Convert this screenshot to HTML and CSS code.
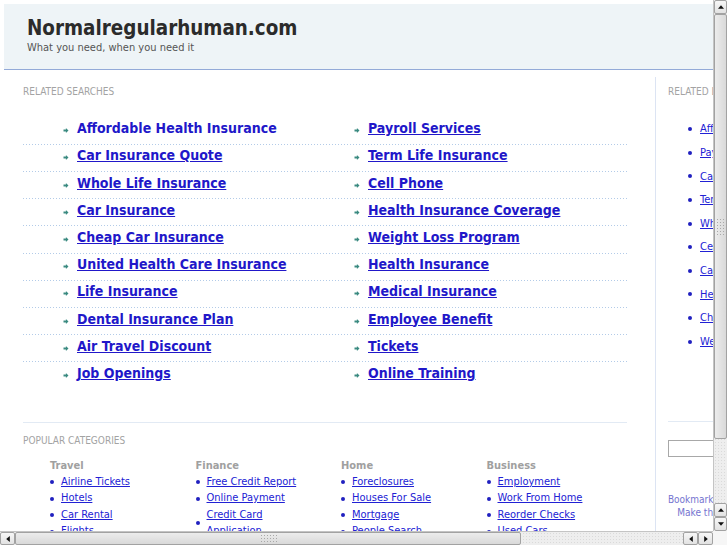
FILE: index.html
```html
<!DOCTYPE html>
<html lang="en">
<head>
<meta charset="utf-8">
<title>Normalregularhuman.com</title>
<link rel="stylesheet" href="styles.css">
</head>
<body>
<div class="page">
  <header class="masthead">
    <h1 class="site-title">Normalregularhuman.com</h1>
    <p class="tagline">What you need, when you need it</p>
  </header>

  <div class="content">
    <main class="main">
      <section class="related">
        <h2 class="section-label">Related Searches</h2>
        <ul class="search-list">
          <li class="search-row">
            <span class="search-cell"><svg class="arrow" viewBox="0 0 5 5"><path d="M0 1.6h2.4V0L5 2.5 2.4 5V3.4H0z"/></svg><a class="hovered" href="#">Affordable Health Insurance</a></span>
            <span class="search-cell"><svg class="arrow" viewBox="0 0 5 5"><path d="M0 1.6h2.4V0L5 2.5 2.4 5V3.4H0z"/></svg><a href="#">Payroll Services</a></span>
          </li>
          <li class="search-row">
            <span class="search-cell"><svg class="arrow" viewBox="0 0 5 5"><path d="M0 1.6h2.4V0L5 2.5 2.4 5V3.4H0z"/></svg><a href="#">Car Insurance Quote</a></span>
            <span class="search-cell"><svg class="arrow" viewBox="0 0 5 5"><path d="M0 1.6h2.4V0L5 2.5 2.4 5V3.4H0z"/></svg><a href="#">Term Life Insurance</a></span>
          </li>
          <li class="search-row">
            <span class="search-cell"><svg class="arrow" viewBox="0 0 5 5"><path d="M0 1.6h2.4V0L5 2.5 2.4 5V3.4H0z"/></svg><a href="#">Whole Life Insurance</a></span>
            <span class="search-cell"><svg class="arrow" viewBox="0 0 5 5"><path d="M0 1.6h2.4V0L5 2.5 2.4 5V3.4H0z"/></svg><a href="#">Cell Phone</a></span>
          </li>
          <li class="search-row">
            <span class="search-cell"><svg class="arrow" viewBox="0 0 5 5"><path d="M0 1.6h2.4V0L5 2.5 2.4 5V3.4H0z"/></svg><a href="#">Car Insurance</a></span>
            <span class="search-cell"><svg class="arrow" viewBox="0 0 5 5"><path d="M0 1.6h2.4V0L5 2.5 2.4 5V3.4H0z"/></svg><a href="#">Health Insurance Coverage</a></span>
          </li>
          <li class="search-row">
            <span class="search-cell"><svg class="arrow" viewBox="0 0 5 5"><path d="M0 1.6h2.4V0L5 2.5 2.4 5V3.4H0z"/></svg><a href="#">Cheap Car Insurance</a></span>
            <span class="search-cell"><svg class="arrow" viewBox="0 0 5 5"><path d="M0 1.6h2.4V0L5 2.5 2.4 5V3.4H0z"/></svg><a href="#">Weight Loss Program</a></span>
          </li>
          <li class="search-row">
            <span class="search-cell"><svg class="arrow" viewBox="0 0 5 5"><path d="M0 1.6h2.4V0L5 2.5 2.4 5V3.4H0z"/></svg><a href="#">United Health Care Insurance</a></span>
            <span class="search-cell"><svg class="arrow" viewBox="0 0 5 5"><path d="M0 1.6h2.4V0L5 2.5 2.4 5V3.4H0z"/></svg><a href="#">Health Insurance</a></span>
          </li>
          <li class="search-row">
            <span class="search-cell"><svg class="arrow" viewBox="0 0 5 5"><path d="M0 1.6h2.4V0L5 2.5 2.4 5V3.4H0z"/></svg><a href="#">Life Insurance</a></span>
            <span class="search-cell"><svg class="arrow" viewBox="0 0 5 5"><path d="M0 1.6h2.4V0L5 2.5 2.4 5V3.4H0z"/></svg><a href="#">Medical Insurance</a></span>
          </li>
          <li class="search-row">
            <span class="search-cell"><svg class="arrow" viewBox="0 0 5 5"><path d="M0 1.6h2.4V0L5 2.5 2.4 5V3.4H0z"/></svg><a href="#">Dental Insurance Plan</a></span>
            <span class="search-cell"><svg class="arrow" viewBox="0 0 5 5"><path d="M0 1.6h2.4V0L5 2.5 2.4 5V3.4H0z"/></svg><a href="#">Employee Benefit</a></span>
          </li>
          <li class="search-row">
            <span class="search-cell"><svg class="arrow" viewBox="0 0 5 5"><path d="M0 1.6h2.4V0L5 2.5 2.4 5V3.4H0z"/></svg><a href="#">Air Travel Discount</a></span>
            <span class="search-cell"><svg class="arrow" viewBox="0 0 5 5"><path d="M0 1.6h2.4V0L5 2.5 2.4 5V3.4H0z"/></svg><a href="#">Tickets</a></span>
          </li>
          <li class="search-row">
            <span class="search-cell"><svg class="arrow" viewBox="0 0 5 5"><path d="M0 1.6h2.4V0L5 2.5 2.4 5V3.4H0z"/></svg><a href="#">Job Openings</a></span>
            <span class="search-cell"><svg class="arrow" viewBox="0 0 5 5"><path d="M0 1.6h2.4V0L5 2.5 2.4 5V3.4H0z"/></svg><a href="#">Online Training</a></span>
          </li>
        </ul>
      </section>

      <section class="categories">
        <h2 class="section-label">Popular Categories</h2>
        <div class="cat-grid">
          <div class="cat">
            <h3 class="cat-title">Travel</h3>
            <ul class="cat-list">
              <li><span class="dot"></span><a href="#">Airline Tickets</a></li>
              <li><span class="dot"></span><a href="#">Hotels</a></li>
              <li><span class="dot"></span><a href="#">Car Rental</a></li>
              <li><span class="dot"></span><a href="#">Flights</a></li>
              <li><span class="dot"></span><a href="#">Cheap Cruises</a></li>
            </ul>
          </div>
          <div class="cat">
            <h3 class="cat-title">Finance</h3>
            <ul class="cat-list">
              <li><span class="dot"></span><a href="#">Free Credit Report</a></li>
              <li><span class="dot"></span><a href="#">Online Payment</a></li>
              <li><span class="dot"></span><a href="#">Credit Card Application</a></li>
              <li><span class="dot"></span><a href="#">Insurance</a></li>
            </ul>
          </div>
          <div class="cat">
            <h3 class="cat-title">Home</h3>
            <ul class="cat-list">
              <li><span class="dot"></span><a href="#">Foreclosures</a></li>
              <li><span class="dot"></span><a href="#">Houses For Sale</a></li>
              <li><span class="dot"></span><a href="#">Mortgage</a></li>
              <li><span class="dot"></span><a href="#">People Search</a></li>
              <li><span class="dot"></span><a href="#">Home Security</a></li>
            </ul>
          </div>
          <div class="cat">
            <h3 class="cat-title">Business</h3>
            <ul class="cat-list">
              <li><span class="dot"></span><a href="#">Employment</a></li>
              <li><span class="dot"></span><a href="#">Work From Home</a></li>
              <li><span class="dot"></span><a href="#">Reorder Checks</a></li>
              <li><span class="dot"></span><a href="#">Used Cars</a></li>
              <li><span class="dot"></span><a href="#">Small Business</a></li>
            </ul>
          </div>
        </div>
      </section>
    </main>

    <aside class="sidebar">
      <h2 class="section-label">Related Links</h2>
      <ul class="side-list">
        <li><span class="dot"></span><a href="#">Affordable Health Insurance</a></li>
        <li><span class="dot"></span><a href="#">Payroll Services</a></li>
        <li><span class="dot"></span><a href="#">Car Insurance Quote</a></li>
        <li><span class="dot"></span><a href="#">Term Life Insurance</a></li>
        <li><span class="dot"></span><a href="#">Whole Life Insurance</a></li>
        <li><span class="dot"></span><a href="#">Cell Phone</a></li>
        <li><span class="dot"></span><a href="#">Car Insurance</a></li>
        <li><span class="dot"></span><a href="#">Health Insurance Coverage</a></li>
        <li><span class="dot"></span><a href="#">Cheap Car Insurance</a></li>
        <li><span class="dot"></span><a href="#">Weight Loss Program</a></li>
      </ul>
      <div class="side-search">
        <input class="search-box" type="text" aria-label="Search">
        <p class="side-links"><a href="#">Bookmark this page</a><br><a href="#">Make this home</a></p>
      </div>
    </aside>
  </div>
</div>

<div class="vscroll">
  <span class="sb-btn"><svg viewBox="0 0 5 3"><path d="M0 3L2.5 0 5 3z"/></svg></span>
  <span class="sb-thumb"><span class="grip"></span></span>
  <span class="sb-track"></span>
  <span class="sb-btn"><svg viewBox="0 0 5 3"><path d="M0 3L2.5 0 5 3z"/></svg></span>
  <span class="sb-btn"><svg viewBox="0 0 5 3"><path d="M0 0L2.5 3 5 0z"/></svg></span>
</div>
<div class="hscroll">
  <span class="sb-btn"><svg viewBox="0 0 3 5"><path d="M3 0L0 2.5 3 5z"/></svg></span>
  <span class="sb-thumb"><span class="grip"></span></span>
  <span class="sb-track"></span>
  <span class="sb-btn"><svg viewBox="0 0 3 5"><path d="M3 0L0 2.5 3 5z"/></svg></span>
  <span class="sb-btn"><svg viewBox="0 0 3 5"><path d="M0 0L3 2.5 0 5z"/></svg></span>
</div>
<div class="sb-corner"></div>
</body>
</html>
```
FILE: styles.css
```css
* { box-sizing: border-box; }

html, body {
  margin: 0;
  padding: 0;
  height: 100%;
  overflow: hidden;
  background: #ffffff;
}

body {
  font-family: "DejaVu Sans Condensed", "DejaVu Sans", sans-serif;
  font-stretch: condensed;
  color: #333;
}

.page {
  width: 1000px;
  padding: 4px 0 0 4px;
}

/* Header */
.masthead {
  height: 66px;
  padding: 13px 0 0 23px;
  background: #eef4f7;
  border-bottom: 1px solid #93aad8;
}

.site-title {
  margin: 0;
  font-size: 20.4px;
  line-height: 23px;
  font-weight: bold;
  color: #2b2b2b;
}

.tagline {
  margin: 1px 0 0;
  font-size: 11px;
  line-height: 13px;
  color: #555;
}

/* Content area */
.content {
  display: flex;
  margin-top: 7px;
}

.main {
  flex: none;
  width: 652px;
  padding: 8.5px 28px 60px 19px;
  border-right: 1px solid #dce4f3;
}

.section-label {
  margin: 0;
  font-size: 10px;
  line-height: 12px;
  font-weight: normal;
  color: #a3a3a3;
  text-transform: uppercase;
}

/* Related searches */
.search-list {
  list-style: none;
  margin: 20.2px 0 0;
  padding: 0;
}

.search-row {
  display: grid;
  grid-template-columns: 291px 1fr;
  padding: 0.5px 0 6.7px;
  background-image: linear-gradient(90deg, #b3cbe8 1px, transparent 1px);
  background-size: 3px 1px;
  background-repeat: repeat-x;
  background-position: left bottom;
  font-size: 14px;
  line-height: 20px;
  font-weight: bold;
}

.search-row:last-child { background-image: none; }

.search-cell {
  padding-left: 40px;
  white-space: nowrap;
}

.arrow {
  width: 6px;
  height: 5px;
  margin-right: 8px;
  fill: #3a8a80;
}

.search-cell a { color: #2117c9; }
.search-cell a.hovered { text-decoration: none; }

/* Popular categories */
.categories {
  margin-top: 32.9px;
  padding-top: 11.3px;
  border-top: 1px solid #e2eaf4;
}

.cat-grid {
  display: grid;
  grid-template-columns: repeat(4, 145.5px);
  padding-left: 27px;
  margin-top: 12px;
}

.cat-title {
  margin: 0 0 1px;
  font-size: 11px;
  line-height: 14px;
  font-weight: bold;
  color: #a0a0a0;
}

.cat-list {
  list-style: none;
  margin: 0;
  padding: 0;
  width: 118px;
}

.cat-list li {
  display: flex;
  align-items: center;
  gap: 7px;
  font-size: 11px;
  line-height: 16.5px;
}

.cat-list a { color: #2121d4; }

.dot {
  flex: none;
  width: 4px;
  height: 4px;
  border-radius: 50%;
  background: #2020c0;
}

/* Sidebar */
.sidebar {
  flex: none;
  width: 330px;
  padding: 8.5px 0 0 12px;
}

.side-list {
  list-style: none;
  margin: 19.9px 0 0;
  padding: 0 0 0 20px;
}

.side-list li {
  display: flex;
  align-items: center;
  gap: 8px;
  font-size: 11px;
  line-height: 23.6px;
  white-space: nowrap;
}

.side-list a { color: #2121d4; }

.side-search {
  margin-top: 68.1px;
  padding-top: 18px;
  border-top: 1px solid #e2eaf4;
  width: 180px;
}

.search-box {
  display: block;
  width: 160px;
  height: 17px;
  margin: 0;
  border: 1px solid #a8a8a8;
  background: #fff;
}

.side-links {
  margin: 37px 0 0 -1px;
  width: 92px;
  font-size: 10px;
  line-height: 12.5px;
  text-align: center;
  white-space: nowrap;
}

.side-links a {
  color: #7474d0;
  text-decoration: none;
}

/* Window scrollbars (drawn over the page) */
.vscroll,
.hscroll {
  position: fixed;
  display: flex;
  background-color: #eeeeee;
  background-image: radial-gradient(#dadada 0.6px, transparent 0.8px);
  background-size: 3px 3px;
}

.vscroll {
  top: 0;
  right: 0;
  width: 14px;
  height: 531px;
  flex-direction: column;
  border-left: 1px solid #c4c4c4;
}

.hscroll {
  left: 0;
  bottom: 0;
  width: 713px;
  height: 14px;
  flex-direction: row;
  border-top: 1px solid #c4c4c4;
}

.sb-corner {
  position: fixed;
  right: 0;
  bottom: 0;
  width: 14px;
  height: 14px;
  background: #f6f6f6;
}

.sb-btn {
  flex: none;
  display: flex;
  align-items: center;
  justify-content: center;
  border: 1px solid #a2a2a2;
  border-radius: 2px;
  background: linear-gradient(#f7f7f7, #e2e2e2);
}

.vscroll .sb-btn { height: 14px; }
.hscroll .sb-btn { width: 15px; }

.vscroll .sb-btn svg { width: 6px; height: 4px; }
.hscroll .sb-btn svg { width: 4px; height: 6px; }
.sb-btn svg { fill: #111; }

.sb-thumb {
  flex: none;
  display: flex;
  align-items: center;
  justify-content: center;
  border: 1px solid #a2a2a2;
  border-radius: 2px;
}

.vscroll .sb-thumb {
  height: 425px;
  background: linear-gradient(90deg, #ececec, #d9d9d9);
}

.hscroll .sb-thumb {
  width: 506px;
  background: linear-gradient(#ececec, #d9d9d9);
}

.grip {
  background-image: radial-gradient(#a8a8a8 0.7px, transparent 0.9px);
  background-size: 3px 3px;
}

.vscroll .grip { width: 9px; height: 17px; }
.hscroll .grip { width: 17px; height: 9px; }

.sb-track { flex: 1; }
```
